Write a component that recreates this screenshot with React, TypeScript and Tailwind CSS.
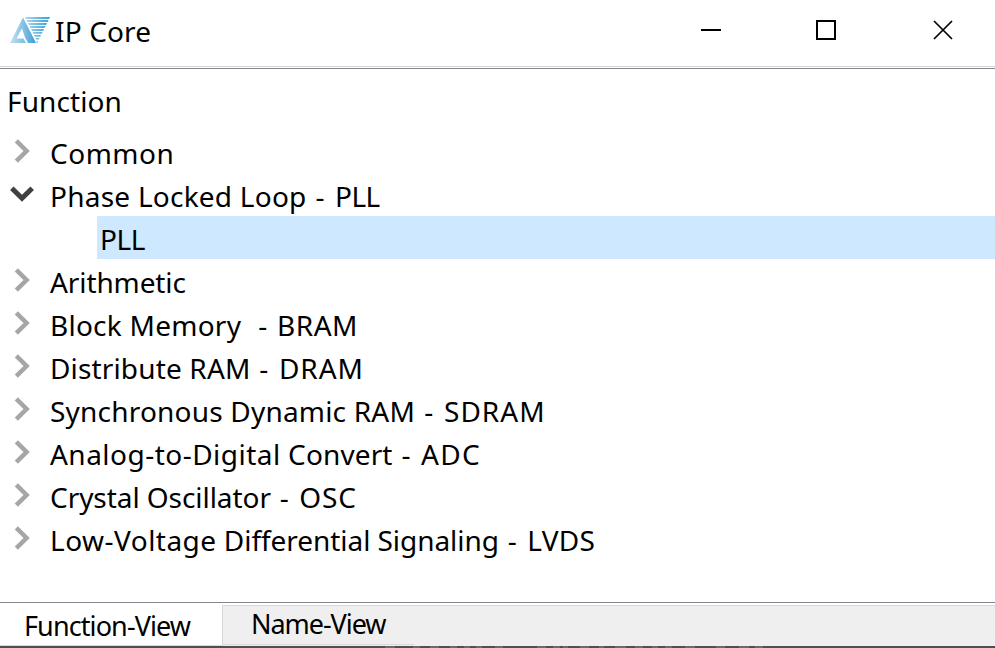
type Row = { parts: [string, string][]; open?: boolean; child?: boolean };

const DASH = "tracking-[1.6px]";

const rows: Row[] = [
  { parts: [["Common", "tracking-[0.5px]"]] },
  { parts: [["Phase Locked Loop", "tracking-[0.24px]"], [" - ", DASH], ["PLL", "tracking-[-0.5px]"]], open: true },
  { parts: [["PLL", "tracking-[-0.4px]"]], child: true },
  { parts: [["Arithmetic", "tracking-[-0.1px]"]] },
  { parts: [["Block Memory", "tracking-[0.25px]"], ["  - ", "tracking-[1.25px]"], ["BRAM", "tracking-[0.5px]"]] },
  { parts: [["Distribute RAM", "tracking-[0.15px]"], [" - ", DASH], ["DRAM", "tracking-[1px]"]] },
  { parts: [["Synchronous Dynamic RAM", "tracking-[0.2px]"], [" - ", "tracking-[1.8px]"], ["SDRAM", "tracking-[1px]"]] },
  { parts: [["Analog-to-Digital", "tracking-[0.48px]"], [" Convert", "tracking-[0.12px]"], [" - ", DASH], ["ADC", "tracking-[1.3px]"]] },
  { parts: [["Crystal Oscillator", "tracking-[-0.06px]"], [" - ", DASH], ["OSC", "tracking-[0.9px]"]] },
  { parts: [["Low-Voltage", "tracking-[0.48px]"], [" Differential Signaling", "tracking-[-0.05px]"], [" - ", DASH], ["LVDS", "tracking-[0.3px]"]] },
];

function Logo() {
  return (
    <svg width="40" height="27" viewBox="0 0 40 27">
      <defs>
        <linearGradient id="leg" x1="0" y1="0" x2="1" y2="0">
          <stop offset="0" stopColor="#c4e0f3" />
          <stop offset="0.5" stopColor="#86c2e6" />
          <stop offset="1" stopColor="#369fd6" />
        </linearGradient>
        <linearGradient id="bars" gradientUnits="userSpaceOnUse" x1="14" y1="0" x2="40" y2="0">
          <stop offset="0" stopColor="#b5daf0" />
          <stop offset="1" stopColor="#319fd6" />
        </linearGradient>
      </defs>
      <path d="M0 26 L13 0.5 L26 26 H18 L15 20.500 L12 11.500 L6.500 21.500 H13.500 L16 26 Z" fill="url(#leg)" />
      <g fill="url(#bars)">
        <path d="M15 0H40L39 2H16Z" />
        <path d="M16.500 3H38.600L37.600 5H17.500Z" />
        <path d="M18 6H37.100L36.100 8H19Z" />
        <path d="M19.500 9H35.600L34.600 11H20.500Z" />
        <path d="M21 12H34.100L33.100 14H22Z" />
        <path d="M22.500 15H32.600L31.700 16.800H23.400Z" />
        <path d="M24 18H31.100L30.200 19.700H24.900Z" />
        <path d="M25.500 21H29.600L28.800 22.600H26.300Z" />
        <path d="M26.500 24H28.200L27.300 26H26.800Z" />
      </g>
    </svg>
  );
}

function Label({ parts }: { parts: [string, string][] }) {
  return (
    <span className="whitespace-pre leading-[46px]">
      {parts.map(([text, tracking], i) => (
        <span key={i} className={tracking}>{text}</span>
      ))}
    </span>
  );
}

export default function App() {
  return (
    <div className="flex h-[648px] w-[995px] flex-col overflow-hidden bg-white font-['Noto_Sans',sans-serif] text-[28px] text-black">
      <header className="flex h-[66px] shrink-0 items-start">
        <div className="ml-[10px] mt-[17px]"><Logo /></div>
        <h1 className="ml-[5px] mt-[10px] w-[200px] whitespace-pre leading-[42px] tracking-[0.15px]">IP Core</h1>
        <svg className="ml-auto mr-[41px] mt-5" width="253" height="21" viewBox="0 0 253 21" fill="none" stroke="#000" strokeWidth="2">
          <path d="M0 10H20" />
          <path d="M116 1H134V19H116Z" />
          <path d="M233 1L251 19M251 1L233 19" strokeWidth="1.700" />
        </svg>
      </header>
      <div className="h-[3px] shrink-0 border-b border-t border-b-[#828790] border-t-[#d5d5d5]" />
      <main className="h-[533px] shrink-0">
        <div className="h-[61px] whitespace-pre pl-[7px] pt-[11px] leading-[42px] tracking-[0.1px]">Function</div>
        {rows.map((r, i) => (
          <div key={i} className="flex h-[43px]">
            {r.child ? (
              <div className="ml-[97px] grow bg-[#cde8ff] pl-[3px]">
                <Label parts={r.parts} />
              </div>
            ) : (
              <>
                <div className="w-[50px] shrink-0">
                  {r.open ? (
                    <svg className="ml-[10px] mt-[13px]" width="24" height="16" viewBox="0 0 24 16" fill="none" stroke="#404040" strokeWidth="5">
                      <path d="M1.800 2.200L12 12.200L22.200 2.200" />
                    </svg>
                  ) : (
                    <svg className="ml-[14px] mt-[9px]" width="17" height="24" viewBox="0 0 17 24" fill="none" stroke="#a6a6a6" strokeWidth="4.500">
                      <path d="M2.300 1.800L12.600 12L2.300 22.200" />
                    </svg>
                  )}
                </div>
                <Label parts={r.parts} />
              </>
            )}
          </div>
        ))}
      </main>
      <footer className="h-[44px] shrink-0 border-t border-[#828790] text-[27px]">
        <div className="flex h-[43px]">
          <div className="w-[222px] shrink-0 border-b border-[#d9d9d9] pl-6">
            <span className="whitespace-pre leading-[46px] tracking-[-0.900px]">Function-View</span>
          </div>
          <div className="mt-[2px] h-[41px] grow border-l border-t border-[#d5dbd5] bg-[#efefef]">
            <div className="h-[39px] w-[191px] border-b border-[#d9d9d9] pl-7">
              <div className="whitespace-pre leading-[36px] tracking-[-1.050px]">Name-View</div>
            </div>
          </div>
        </div>
      </footer>
      <div className="h-[2px] shrink-0 bg-[#504e4f]">
        <svg className="block" width="995" height="2" viewBox="0 0 995 2">
          <path
            d="M385 1h10M413 1h7M430 1h9M450 1h7M464 1h6M476 1h6M495 1h8M537 1h9M553 1h7M563 1h5M580 1h9M599 1h5M615 1h11M635 1h8M652 1h6M665 1h7M685 1h10M716 1h9M739 1h10M755 1h8"
            stroke="#6c6a6a"
            strokeWidth="2"
          />
        </svg>
      </div>
    </div>
  );
}
